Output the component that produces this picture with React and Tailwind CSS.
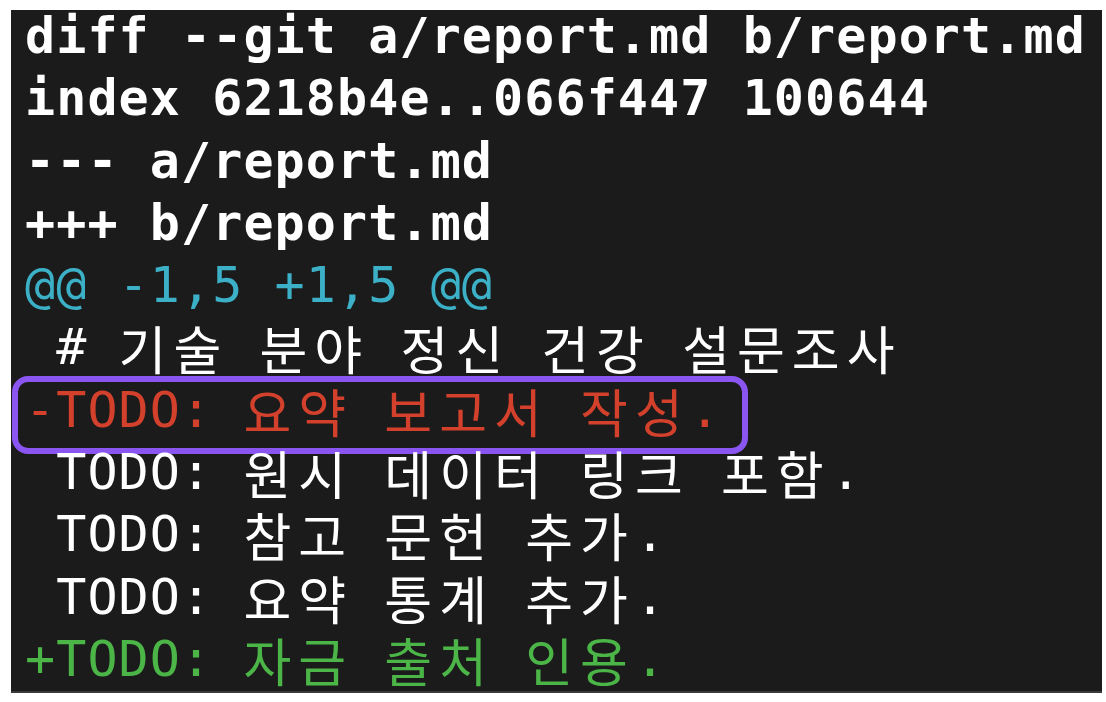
import React from 'react'

const HANGUL = /([\uAC00-\uD7A3]+)/

const lines = [
  { text: 'diff --git a/report.md b/report.md', color: 'text-white', bold: true },
  { text: 'index 6218b4e..066f447 100644', color: 'text-white', bold: true },
  { text: '--- a/report.md', color: 'text-white', bold: true },
  { text: '+++ b/report.md', color: 'text-white', bold: true },
  { text: '@@ -1,5 +1,5 @@', color: 'text-[#3cb0c6]' },
  { text: ' # 기술 분야 정신 건강 설문조사', color: 'text-white' },
  { text: '-TODO: 요약 보고서 작성.', color: 'text-[#d3412d]', marked: true },
  { text: ' TODO: 원시 데이터 링크 포함.', color: 'text-white' },
  { text: ' TODO: 참고 문헌 추가.', color: 'text-white' },
  { text: ' TODO: 요약 통계 추가.', color: 'text-white' },
  { text: '+TODO: 자금 출처 인용.', color: 'text-[#4cb548]' },
]

const Line = ({ text, color, bold, marked }) => {
  const parts = text.split(HANGUL)
  return (
    <div
      className={`relative h-[62.3px] leading-[62.3px] whitespace-pre ${color} ${bold ? 'font-bold' : 'font-normal'}`}
    >
      {/* highlight around the removed line */}
      {marked && (
        <div className="absolute left-[-13px] top-[-3px] w-[736px] h-[78px] rounded-[16px] border-[6px] border-[#8b55f2]" />
      )}
      {parts.map((p, i) =>
        HANGUL.test(p) ? (
          <span
            key={i}
            className="font-['Noto_Sans_CJK_KR',sans-serif] text-[52px] tracking-[7px] leading-none align-[-6px]"
          >
            {p}
          </span>
        ) : (
          <React.Fragment key={i}>{p}</React.Fragment>
        )
      )}
    </div>
  )
}

const App = () => {
  return (
    <div className="min-h-screen bg-white pt-[10px] pl-[11px]">
      <div className="w-[1091px] h-[683px] bg-[#1b1b1b] overflow-hidden pl-[14px] border-b-2 border-[#3a3a3a]">
        <div className="-mt-[5px] font-['DejaVu_Sans_Mono','Liberation_Mono',monospace] text-[50px] tracking-[1.1px]">
          {lines.map((line, i) => (
            <Line key={i} {...line} />
          ))}
        </div>
      </div>
    </div>
  )
}

export default App
